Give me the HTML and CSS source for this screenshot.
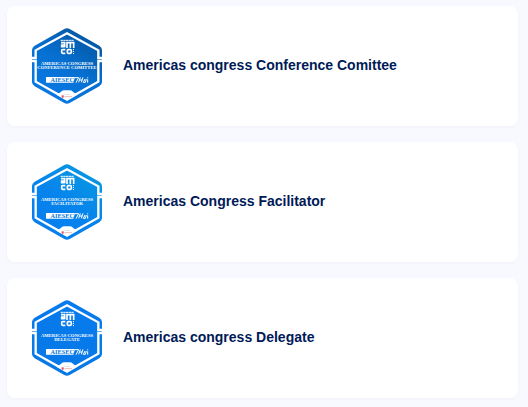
FILE: index.html
```html
<!DOCTYPE html>
<html lang="en">
<head>
    <meta charset="UTF-8">
    <meta name="viewport" content="width=device-width, initial-scale=1.0">
    <title>Americas Congress Badges</title>
    <link rel="stylesheet" href="styles.css">
</head>
<body>
    <!-- shared badge artwork -->
    <svg class="defs" width="0" height="0" aria-hidden="true">
        <defs>
            <linearGradient id="conference" x1="0.2" y1="1" x2="0.8" y2="0">
                <stop offset="0" stop-color="#087be8"/>
                <stop offset="0.5" stop-color="#0670d2"/>
                <stop offset="1" stop-color="#04549c"/>
            </linearGradient>
            <linearGradient id="facilitator" x1="0.2" y1="1" x2="0.8" y2="0">
                <stop offset="0" stop-color="#077df0"/>
                <stop offset="0.5" stop-color="#0784ec"/>
                <stop offset="1" stop-color="#079ae0"/>
            </linearGradient>
            <linearGradient id="delegate" x1="0.2" y1="1" x2="0.8" y2="0">
                <stop offset="0" stop-color="#0778e6"/>
                <stop offset="1" stop-color="#077bee"/>
            </linearGradient>
            <path id="hexagon" d="M121 21Q129 16 137 21L226 71Q234 76 234 84V180Q234 188 226 193L137 243Q129 248 121 243L32 193Q24 188 24 180V84Q24 76 32 71Z"/>
            <g id="details">
                <g fill="none" stroke="#fff" stroke-width="7">
                    <path d="M22 108H35V85L129 34L223 85V108H236"/>
                    <path d="M22 117H35V179L129 232L223 179V117H236"/>
                </g>
                <path fill="#fff" d="M129 236L99 219L111 209Q116 205 121 205H137Q142 205 147 209L159 219Z"/>
                <path fill="#e84b50" d="M113 220H119V227H113Z"/>
                <path stroke="#d99a9d" stroke-width="2" d="M121 224H144"/>
                <path stroke="#c6d4df" stroke-width="2" d="M121 217H137"/>
                <path stroke="#fff" stroke-width="3" stroke-dasharray="7 1" d="M110 55H150"/>
                <g fill="none" stroke="#fff" stroke-width="5">
                    <path d="M111 62H122V76M122 74H113V69H122M129 78V62H149V78M139 62V78"/>
                    <path d="M124 83H116Q113 83 113 86V91Q113 94 116 94H124M133 83H139Q142 83 142 86V91Q142 94 139 94H133Q130 94 130 91V86Q130 83 133 83Z"/>
                </g>
                <path fill="#fff" d="M147 81H150V84H147ZM147 87H150V90H147ZM147 93H150V96H147Z"/>
                <path fill="#fff" d="M66 165H153L148 182H66Z"/>
                <g fill="none" stroke="#fff" stroke-width="3">
                    <path d="M153 167H164L156 182M169 166L164 181M177 166L172 181M166 174H175M183 171L178 181H184L187 171M191 172V182M191 166V169"/>
                </g>
            </g>
        </defs>
    </svg>

    <main class="badge-list">
        <div class="badge-card">
            <svg class="badge" viewBox="21 18 216 228" role="img" aria-label="Conference Comittee badge">
                <use href="#hexagon" fill="url(#conference)"/>
                <use href="#details"/>
                <text class="badge-text" x="129" y="128">AMERICAS CONGRESS</text>
                <text class="badge-text" x="129" y="142">CONFERENCE COMITTEE</text>
                <text class="badge-brand" x="115" y="180">AIESEC</text>
            </svg>
            <h2 class="badge-title">Americas congress Conference Comittee</h2>
        </div>

        <div class="badge-card">
            <svg class="badge" viewBox="21 18 216 228" role="img" aria-label="Facilitator badge">
                <use href="#hexagon" fill="url(#facilitator)"/>
                <use href="#details"/>
                <text class="badge-text" x="129" y="128">AMERICAS CONGRESS</text>
                <text class="badge-text" x="129" y="141">FACILITATOR</text>
                <text class="badge-brand" x="115" y="180">AIESEC</text>
            </svg>
            <h2 class="badge-title">Americas Congress Facilitator</h2>
        </div>

        <div class="badge-card">
            <svg class="badge" viewBox="21 18 216 228" role="img" aria-label="Delegate badge">
                <use href="#hexagon" fill="url(#delegate)"/>
                <use href="#details"/>
                <text class="badge-text" x="129" y="128">AMERICAS CONGRESS</text>
                <text class="badge-text" x="129" y="141">DELEGATE</text>
                <text class="badge-brand" x="115" y="180">AIESEC</text>
            </svg>
            <h2 class="badge-title">Americas congress Delegate</h2>
        </div>
    </main>
</body>
</html>
```
FILE: styles.css
```css
body {
    margin: 0;
    background-color: #f8f9fe;
    font-family: "Liberation Sans", Arial, sans-serif;
}
.defs {
    display: block;
}
.badge-list {
    display: flex;
    flex-direction: column;
    gap: 16px;
    padding: 6px 10px 9px 7px;
}
.badge-card {
    display: flex;
    align-items: center;
    gap: 20px;
    padding: 22px 24px;
    background-color: #fff;
    border-radius: 8px;
    box-shadow: 0 1px 3px rgba(30, 50, 100, 0.04);
}
.badge {
    flex-shrink: 0;
    width: 72px;
    height: 76px;
}
.badge-title {
    margin: 0;
    padding-bottom: 2px;
    color: #001a57;
    font-size: 14px;
    line-height: 20px;
    font-weight: bold;
}
.badge-text {
    fill: #fff;
    font-family: "Liberation Serif", serif;
    font-size: 14px;
    font-weight: bold;
    text-anchor: middle;
}
.badge-brand {
    fill: #0878dc;
    font-family: "Liberation Serif", serif;
    font-size: 19px;
    font-weight: bold;
    text-anchor: middle;
}
```
